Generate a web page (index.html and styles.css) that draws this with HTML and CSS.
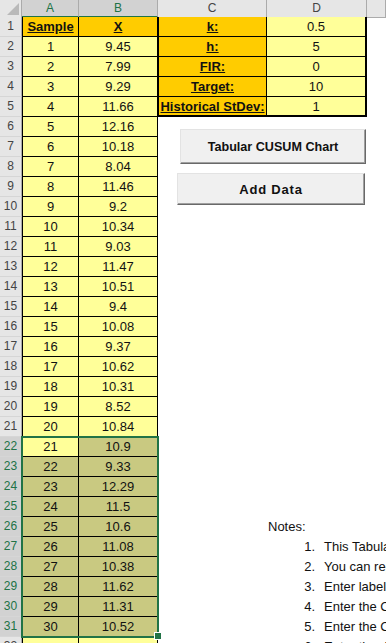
FILE: index.html
```html
<!DOCTYPE html>
<html lang="en">

<head>
  <meta charset="utf-8">
  <meta name="viewport" content="width=device-width, initial-scale=1">
  <title>Tabular CUSUM</title>
  <link rel="stylesheet" href="styles.css">
</head>

<body>
  <div class="sheet">
    <div class="row colhead">
      <div class="corner"><span></span></div>
      <div class="on">A</div>
      <div class="on">B</div>
      <div>C</div>
      <div>D</div>
      <div></div>
    </div>

    <div class="row">
      <div class="rh">1</div>
      <div class="c a hd">Sample</div>
      <div class="c hd">X</div>
      <div class="c lbl">k:</div>
      <div class="c val">0.5</div>
    </div>
    <div class="row">
      <div class="rh">2</div>
      <div class="c a">1</div>
      <div class="c">9.45</div>
      <div class="c lbl">h:</div>
      <div class="c val">5</div>
    </div>
    <div class="row">
      <div class="rh">3</div>
      <div class="c a">2</div>
      <div class="c">7.99</div>
      <div class="c lbl">FIR:</div>
      <div class="c val">0</div>
    </div>
    <div class="row">
      <div class="rh">4</div>
      <div class="c a">3</div>
      <div class="c">9.29</div>
      <div class="c lbl">Target:</div>
      <div class="c val">10</div>
    </div>
    <div class="row">
      <div class="rh">5</div>
      <div class="c a">4</div>
      <div class="c">11.66</div>
      <div class="c lbl last">Historical StDev:</div>
      <div class="c val last">1</div>
    </div>
    <div class="row"><div class="rh">6</div><div class="c a">5</div><div class="c">12.16</div></div>
    <div class="row"><div class="rh">7</div><div class="c a">6</div><div class="c">10.18</div></div>
    <div class="row"><div class="rh">8</div><div class="c a">7</div><div class="c">8.04</div></div>
    <div class="row"><div class="rh">9</div><div class="c a">8</div><div class="c">11.46</div></div>
    <div class="row"><div class="rh">10</div><div class="c a">9</div><div class="c">9.2</div></div>
    <div class="row"><div class="rh">11</div><div class="c a">10</div><div class="c">10.34</div></div>
    <div class="row"><div class="rh">12</div><div class="c a">11</div><div class="c">9.03</div></div>
    <div class="row"><div class="rh">13</div><div class="c a">12</div><div class="c">11.47</div></div>
    <div class="row"><div class="rh">14</div><div class="c a">13</div><div class="c">10.51</div></div>
    <div class="row"><div class="rh">15</div><div class="c a">14</div><div class="c">9.4</div></div>
    <div class="row"><div class="rh">16</div><div class="c a">15</div><div class="c">10.08</div></div>
    <div class="row"><div class="rh">17</div><div class="c a">16</div><div class="c">9.37</div></div>
    <div class="row"><div class="rh">18</div><div class="c a">17</div><div class="c">10.62</div></div>
    <div class="row"><div class="rh">19</div><div class="c a">18</div><div class="c">10.31</div></div>
    <div class="row"><div class="rh">20</div><div class="c a">19</div><div class="c">8.52</div></div>
    <div class="row"><div class="rh">21</div><div class="c a">20</div><div class="c">10.84</div></div>

    <!-- selected range A22:B31 -->
    <div class="row"><div class="rh on">22</div><div class="c a">21</div><div class="c sel">10.9</div></div>
    <div class="row"><div class="rh on">23</div><div class="c a sel">22</div><div class="c sel">9.33</div></div>
    <div class="row"><div class="rh on">24</div><div class="c a sel">23</div><div class="c sel">12.29</div></div>
    <div class="row"><div class="rh on">25</div><div class="c a sel">24</div><div class="c sel">11.5</div></div>
    <div class="row">
      <div class="rh on">26</div><div class="c a sel">25</div><div class="c sel">10.6</div>
      <div class="note">Notes:</div>
    </div>
    <div class="row">
      <div class="rh on">27</div><div class="c a sel">26</div><div class="c sel">11.08</div>
      <div class="note"><span class="num">1.</span>This Tabular CUSUM Chart template plots the upper and lower sums.</div>
    </div>
    <div class="row">
      <div class="rh on">28</div><div class="c a sel">27</div><div class="c sel">10.38</div>
      <div class="note"><span class="num">2.</span>You can replace the sample data with your own.</div>
    </div>
    <div class="row">
      <div class="rh on">29</div><div class="c a sel">28</div><div class="c sel">11.62</div>
      <div class="note"><span class="num">3.</span>Enter labels for the samples in column A.</div>
    </div>
    <div class="row">
      <div class="rh on">30</div><div class="c a sel">29</div><div class="c sel">11.31</div>
      <div class="note"><span class="num">4.</span>Enter the CUSUM parameters k and h.</div>
    </div>
    <div class="row">
      <div class="rh on">31</div><div class="c a sel">30</div><div class="c sel">10.52</div>
      <div class="note"><span class="num">5.</span>Enter the CUSUM target and standard deviation.</div>
    </div>
    <div class="row">
      <div class="rh">32</div><div class="c a"></div><div class="c"></div>
      <div class="note"><span class="num">6.</span>Enter the data and click the chart button.</div>
    </div>

    <div class="selection"><span class="handle"></span></div>
    <button type="button" class="btn chart">Tabular CUSUM Chart</button>
    <button type="button" class="btn add">Add Data</button>
  </div>
</body>

</html>
```

FILE: styles.css
```css
* {
  margin: 0;
  padding: 0;
  box-sizing: border-box;
}

body {
  font-family: 'Liberation Sans', Arial, sans-serif;
  font-size: 13px;
  color: #111;
  background-color: #fff;
  overflow: hidden;
}

.sheet {
  position: relative;
  width: 386px;
}

.row {
  display: grid;
  grid-template-columns: 22px 57px 79px 109px 100px 1fr;
  height: 20px;
  line-height: 19px;
  white-space: nowrap;
}

/* column letters */
.colhead {
  height: 17px;
  line-height: 16px;
  font-size: 12px;
}

.colhead div {
  background-color: #e6e6e6;
  color: #444;
  text-align: center;
  border-right: 1px solid #ababab;
  border-bottom: 1px solid #ababab;
}

.colhead .on {
  background-color: #d2d2d2;
  color: #217346;
  border-bottom: 2px solid #217346;
}

.corner {
  display: flex;
  align-items: flex-end;
  justify-content: flex-end;
  padding: 0 2px 2px 0;
}

.corner span {
  border-left: 12px solid transparent;
  border-bottom: 12px solid #b9b9b9;
}

/* row numbers */
.rh {
  background-color: #e6e6e6;
  color: #444;
  font-size: 12px;
  text-align: center;
  border-right: 1px solid #ababab;
  border-bottom: 1px solid #d6d6d6;
}

.rh.on {
  background-color: #d2d2d2;
  color: #217346;
}

/* cells */
.c {
  text-align: center;
  background-color: #ffff99;
  border-right: 1px solid #000;
  border-bottom: 1px solid #000;
  overflow: hidden;
}

.a {
  border-left: 1px solid #000;
}

.hd {
  background-color: #ffcc00;
  font-weight: bold;
  text-decoration: underline;
}

.lbl {
  background-color: #ffcc00;
  font-weight: bold;
  text-decoration: underline;
  border-left: 1px solid #000;
}

.val {
  border-right: 2px solid #000;
}

.last {
  border-bottom-width: 2px;
}

.sel {
  background-color: #c9c981;
}

.note {
  grid-column: 5 / -1;
  padding-left: 1px;
  overflow: hidden;
}

.num {
  display: inline-block;
  width: 47px;
  margin-right: 9px;
  text-align: right;
}

/* selection frame over A22:B31 */
.selection {
  position: absolute;
  left: 21px;
  top: 436px;
  width: 138px;
  height: 202px;
  border: 2px solid #217346;
}

.handle {
  position: absolute;
  right: -4px;
  bottom: -3px;
  width: 6px;
  height: 6px;
  background-color: #217346;
  outline: 1px solid #fff;
}

/* form buttons floating on the sheet */
.btn {
  position: absolute;
  display: flex;
  align-items: center;
  justify-content: center;
  font-family: 'Liberation Sans', Arial, sans-serif;
  font-weight: bold;
  color: #111;
  background-color: #f0f0f0;
  border: 1px solid;
  border-color: #e3e3e3 #696969 #696969 #e3e3e3;
  box-shadow: inset -1px -1px 0 #a0a0a0;
}

.chart {
  left: 180px;
  top: 129px;
  width: 186px;
  height: 35px;
  font-size: 12.6px;
}

.add {
  left: 177px;
  top: 173px;
  width: 188px;
  height: 32px;
  font-size: 13px;
  letter-spacing: 0.8px;
}
```
